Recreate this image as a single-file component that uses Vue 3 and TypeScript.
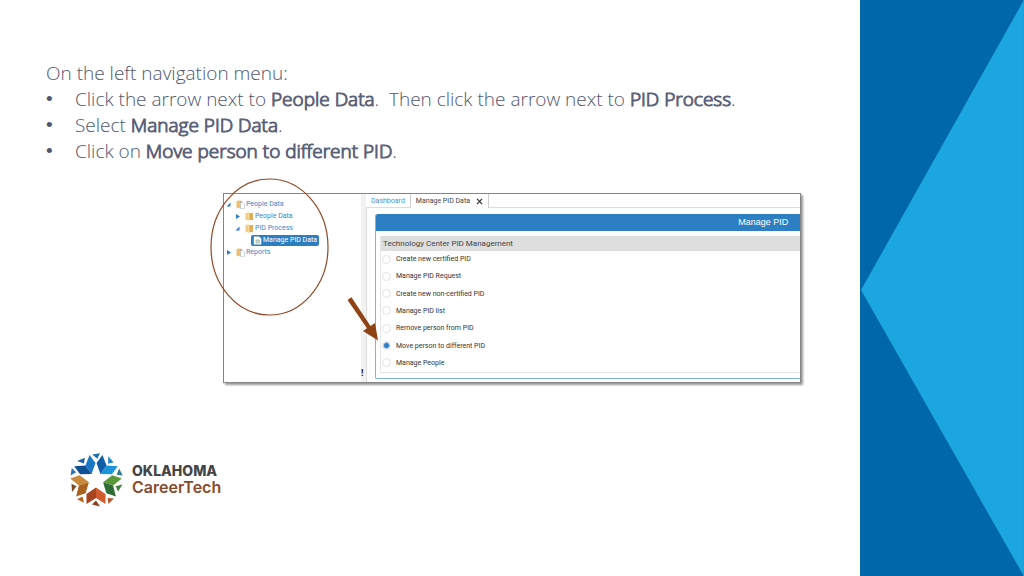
<script setup lang="ts">
import { ref } from 'vue'

interface TreeNode {
  label: string
  level: number
  arrow: 'open' | 'closed' | 'none'
  icon: 'group' | 'folder' | 'page'
}

const nodes: TreeNode[] = [
  { label: 'People Data', level: 0, arrow: 'open', icon: 'group' },
  { label: 'People Data', level: 1, arrow: 'closed', icon: 'folder' },
  { label: 'PID Process', level: 1, arrow: 'open', icon: 'folder' },
  { label: 'Manage PID Data', level: 2, arrow: 'none', icon: 'page' },
  { label: 'Reports', level: 0, arrow: 'closed', icon: 'group' },
]

const options: string[] = [
  'Create new certified PID',
  'Manage PID Request',
  'Create new non-certified PID',
  'Manage PID list',
  'Remove person from PID',
  'Move person to different PID',
  'Manage People',
]
const selected = ref('Move person to different PID')

const petals = [
  { angle: 0, dark: '#a8431f', light: '#cf5a2b', chip: '#8a3c1e', chip2: '#b5582d' },
  { angle: 72, dark: '#c98a3c', light: '#a8641f', chip: '#7a4a22', chip2: '#b5651d' },
  { angle: 144, dark: '#1b78c4', light: '#0f4f93', chip: '#1f5f9e', chip2: '#2b74b8' },
  { angle: 216, dark: '#1d95da', light: '#0e5fa8', chip: '#1c86cc', chip2: '#1a6fae' },
  { angle: 288, dark: '#2f6b34', light: '#5a983c', chip: '#3f7f3a', chip2: '#2f7a8c' },
]
</script>

<template>
  <div class="slide">
    <main class="content">
      <section class="instructions">
        <p>On the left navigation menu:</p>
        <ul>
          <li>Click the arrow next to <b>People Data</b>.&nbsp; Then click the arrow next to <b>PID Process</b>.</li>
          <li>Select <b>Manage PID Data</b>.</li>
          <li>Click on <b>Move person to different PID</b>.</li>
        </ul>
      </section>

      <section class="frame">
        <nav class="tree">
          <a v-for="(n, i) in nodes" :key="i" href="#" class="node" :class="'level' + n.level">
            <svg class="caret" viewBox="0 0 5 5">
              <path v-if="n.arrow === 'closed'" d="M1 0L5 2.5L1 5z" />
              <path v-else-if="n.arrow === 'open'" d="M4.5 .5V4.5H.5z" />
            </svg>
            <span class="item" :class="{ current: n.icon === 'page' }">
              <svg class="glyph" viewBox="0 0 9 9">
                <template v-if="n.icon === 'group'">
                  <path d="M.5 1L3.500 .3V8.500L.5 7.500z" fill="#eebf6c" />
                  <path d="M3.500 .8H6V8H3.500z" fill="#dba85a" />
                  <path d="M4.500 2.500H7L8.500 4V8.600H4.500z" fill="#fff" stroke="#a9b8c8" stroke-width=".6" />
                </template>
                <template v-else-if="n.icon === 'folder'">
                  <path d="M.5 1L4 .3V8.700L.5 7.700z" fill="#f2cd86" />
                  <path d="M4 1H8V8H4z" fill="#dfae55" />
                  <path d="M4 1V8" stroke="#fbe6b8" stroke-width=".8" />
                </template>
                <template v-else>
                  <path d="M.8 .5H6L8.300 2.500V8.500H.8z" fill="#fff" />
                  <path d="M3 4H6.500V7H3z" fill="#cfe0c0" stroke="#8fa3a8" stroke-width=".6" />
                </template>
              </svg>
              <span class="name">{{ n.label }}</span>
            </span>
          </a>
        </nav>
        <div class="splitter">!</div>
        <div class="work">
          <div class="tabs">
            <button type="button" class="tab">Dashboard</button>
            <button type="button" class="tab active">
              Manage PID Data
              <svg class="close" viewBox="0 0 7 7"><path d="M1 .8L6.200 6.200M6 .8L1 6.200" /></svg>
            </button>
            <span class="rest"></span>
          </div>
          <div class="pane">
            <div class="panel">
              <h1>Manage PID</h1>
              <div class="group">
                <h2>Technology Center PID Management</h2>
                <div class="options">
                  <label v-for="o in options" :key="o">
                    <input v-model="selected" type="radio" name="action" :value="o" />{{ o }}
                  </label>
                </div>
              </div>
            </div>
          </div>
        </div>
        <svg class="marks" viewBox="0 0 170 180">
          <ellipse cx="59.500" cy="69" rx="58.500" ry="68" fill="none" stroke="#8f4a28" stroke-width="1.200" />
          <path d="M137.500 122L141.500 119.200L160.500 148L165 145L168 162.500L153 153L157 150.200z" fill="#8f4314" />
        </svg>
      </section>

      <footer class="brand">
        <svg class="star" viewBox="-27 -27 54 54">
          <g v-for="p in petals" :key="p.angle" :transform="`rotate(${p.angle})`">
            <path d="M0 7.500L-9.500 14V24L0 18z" :fill="p.dark" />
            <path d="M0 7.500L9.500 14V24L0 18z" :fill="p.light" />
            <path d="M-4 24.500L0 20.500L4 26.500z" :fill="p.chip" />
            <path d="M11.500 18L18 18.500L12.500 24z" :fill="p.chip2" />
          </g>
        </svg>
        <div class="wordmark"><strong>OKLAHOMA</strong><span>CareerTech</span></div>
      </footer>
    </main>
    <svg class="side" viewBox="0 0 164 576" preserveAspectRatio="none">
      <path d="M0 0H164V576H0z" fill="#0067ab" />
      <path d="M164 0V576L1 290z" fill="#1ba6df" />
    </svg>
  </div>
</template>

<style>
body { margin: 0; background: #fff; }
</style>

<style scoped>
.slide { display: flex; min-height: 100vh; font-family: Roboto, "Liberation Sans", sans-serif; }
.content { flex: 1; min-width: 0; padding: 60px 59px 0 46px; box-sizing: border-box; }
.side { width: 16vw; height: 100vh; flex: none; }

.instructions { color: #50566f; font: 300 19px/26px "Open Sans", sans-serif; white-space: nowrap; }
.instructions p, .instructions ul { margin: 0; padding: 0; }
.instructions ul { list-style: none; }
.instructions li { display: flex; white-space: pre; }
.instructions li::before { content: "•"; width: 29px; flex: none; font-family: "Liberation Sans", sans-serif; }
.instructions b { font-weight: 300; -webkit-text-stroke: 1px #5c627a; }

.frame {
  position: relative; display: flex; height: 188px; margin: 29px 0 0 177px;
  border: 1px solid #858585; background: #fff; box-shadow: 2px 2px 2px #999;
}
.tree { width: 137px; padding-top: 4px; flex: none; }
.node { display: flex; align-items: center; height: 12px; color: #3a87c8; font-size: 7px; line-height: 12px; text-decoration: none; white-space: nowrap; }
.level0 { padding-left: 2px; }
.level1 { padding-left: 11px; }
.level2 { padding-left: 18px; }
.caret { width: 5px; height: 5px; fill: #2f80c3; }
.item { display: flex; align-items: center; gap: 1px; margin-left: 5px; }
.glyph { width: 9px; height: 9px; }
.current { margin-left: 4px; padding: 0 2px; gap: 1px; height: 11px; border-radius: 2px; background: #2b7fc0; color: #fff; }
.current .name { line-height: 11px; }

.splitter { width: 5px; flex: none; display: flex; align-items: flex-end; background: #f2f2f2; color: #111; font-size: 9px; line-height: 18px; font-weight: 700; }
.work { flex: 1; min-width: 0; display: flex; flex-direction: column; }
.tabs { display: flex; height: 14px; }
.tab { display: flex; align-items: center; gap: 6px; padding: 0 5px; margin: 0; border: 0; border-bottom: 1px solid #ddd; background: #fff; color: #4a93cf; font: 7px/12px Roboto, "Liberation Sans", sans-serif; white-space: nowrap; }
.tab.active { border: 1px solid #ccc; border-width: 0 1px; color: #444; }
.rest { flex: 1; border-bottom: 1px solid #ddd; }
.close { width: 7px; height: 7px; fill: none; stroke: #333; stroke-width: 1.2; }
.pane { flex: 1; padding: 6px 0 3px 8px; border-left: 1px solid #ddd; }
.panel { height: 100%; box-sizing: border-box; border: solid #7db5de; border-width: 0 0 1px 1px; border-radius: 2px 0 0 2px; }
h1 { margin: 0; padding-right: 12px; background: #2b7fc2; color: #fff; font: 400 9px/17px "Liberation Sans", Arial, sans-serif; text-align: right; border-radius: 2px 0 0 0; }
.group { margin: 5px 0 0 4px; padding-bottom: 1px; border: solid #e6e6e6; border-width: 0 0 1px 1px; }
h2 { margin: 0; padding-left: 2px; background: #dedede; color: #444; font-size: 8px; line-height: 15px; font-weight: 400; }
.options { display: flex; flex-direction: column; justify-content: space-between; height: 120px; }
label { display: flex; align-items: center; gap: 5px; height: 16px; padding-left: 1px; color: #333; font-size: 7px; line-height: 16px; }
input { appearance: none; width: 9px; height: 9px; margin: 0; border: 1px solid #e2e2e2; border-radius: 50%; background: #fff; }
input:checked { background: radial-gradient(circle, #2f80c3 2px, #a9cde9 3px, #fff 4px); }
.marks { position: absolute; left: -14px; top: -16px; width: 170px; height: 180px; pointer-events: none; }

.brand { display: flex; align-items: center; gap: 9px; margin: 70px 0 0 23px; }
.star { width: 54px; height: 54px; }
.wordmark { display: flex; flex-direction: column; padding-bottom: 3px; font: 600 16px/16px Inter, sans-serif; color: #8a4a2b; }
.wordmark strong { font-size: 14px; font-weight: 800; color: #454545; }
</style>
